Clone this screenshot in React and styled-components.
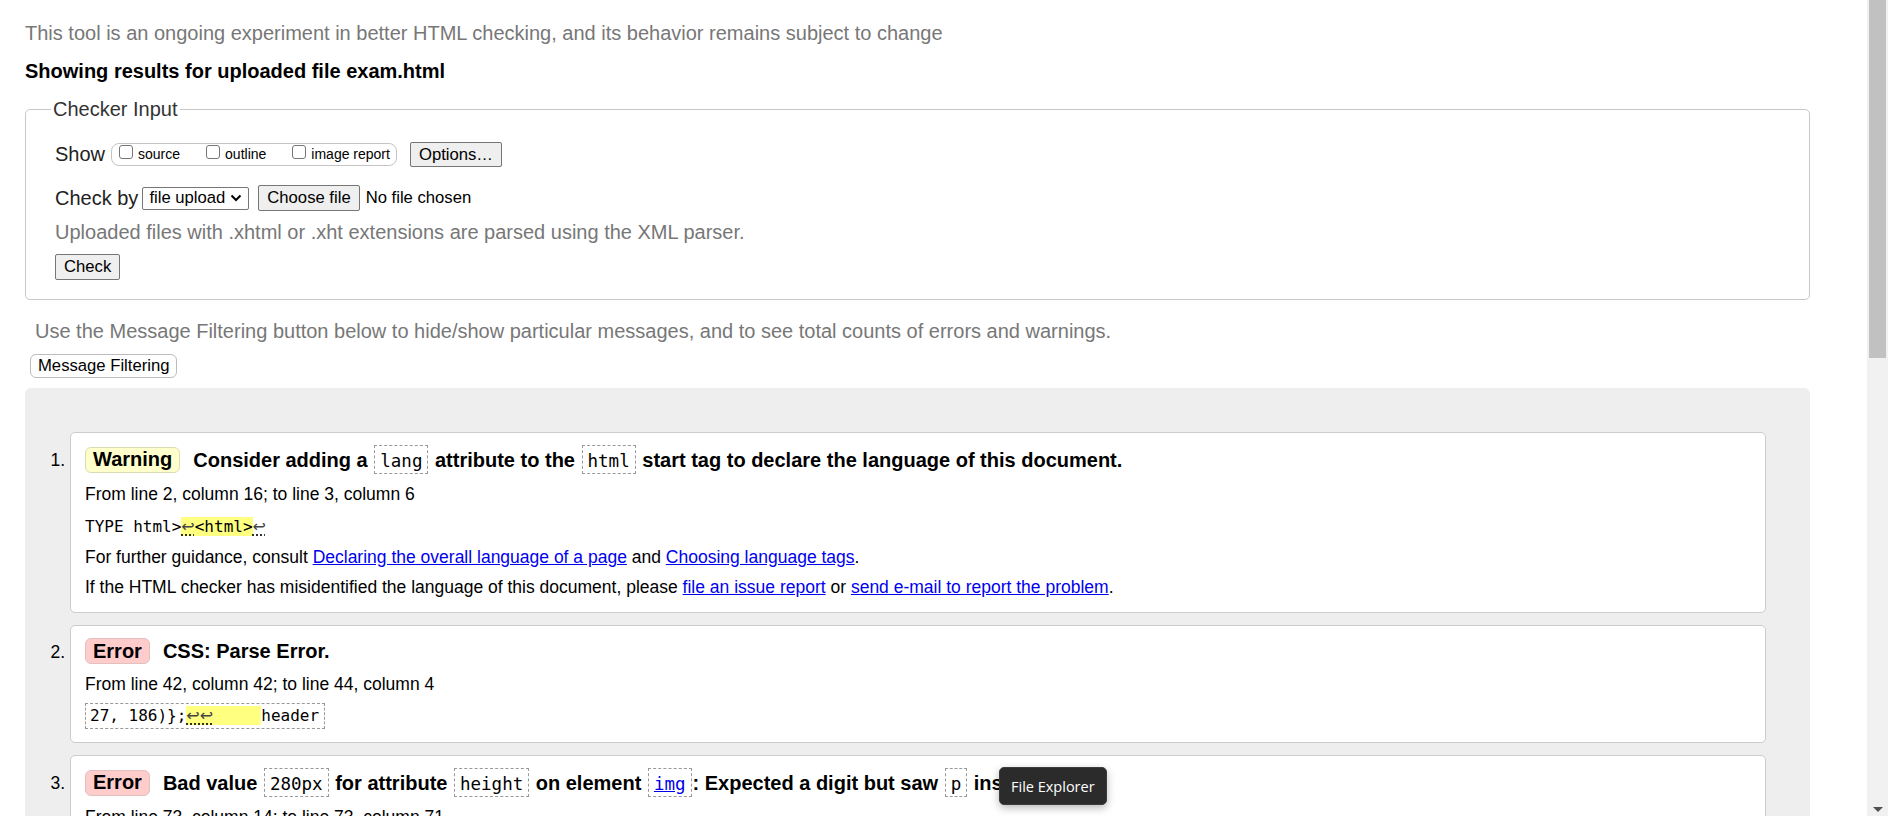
import React from "react"
import styled, { createGlobalStyle } from "styled-components"

const GlobalStyle = createGlobalStyle`
  html, body {
    margin: 0;
    padding: 0;
    background: #fff;
  }
  body {
    font-family: "Liberation Sans", Arial, sans-serif;
    color: #000;
    overflow: hidden;
  }
`

const MONO = `"DejaVu Sans Mono", "Liberation Mono", monospace`

export default function App() {
    return (
        <Screen>
            <GlobalStyle />
            <Page>
                <Intro>This tool is an ongoing experiment in better HTML checking, and its behavior remains subject to change</Intro>
                <Heading>Showing results for uploaded file exam.html</Heading>

                <Fieldset>
                    <Legend>Checker Input</Legend>
                    <Row $h={25}>
                        <FieldLabel $mr={6}>Show</FieldLabel>
                        <CheckGroup>
                            <CheckItem><CheckBox /><CheckText>source</CheckText></CheckItem>
                            <CheckItem><CheckBox /><CheckText>outline</CheckText></CheckItem>
                            <CheckItem><CheckBox /><CheckText>image report</CheckText></CheckItem>
                        </CheckGroup>
                        <Button $h={25}>Options…</Button>
                    </Row>
                    <Row $h={26} $mt={18}>
                        <FieldLabel $mr={4}>Check by</FieldLabel>
                        <SelectBox>
                            <span>file upload</span>
                            <svg width="12" height="8" viewBox="0 0 12 8">
                                <polyline points="1.5,1.5 6,6 10.5,1.5" fill="none" stroke="#000" strokeWidth="2" />
                            </svg>
                        </SelectBox>
                        <Button $h={26} $ml={9}>Choose file</Button>
                        <FileName>No file chosen</FileName>
                    </Row>
                    <Hint>Uploaded files with .xhtml or .xht extensions are parsed using the XML parser.</Hint>
                    <Row $h={26} $mt={10}>
                        <Button $h={26}>Check</Button>
                    </Row>
                </Fieldset>

                <FilterHint>Use the Message Filtering button below to hide/show particular messages, and to see total counts of errors and warnings.</FilterHint>
                <FilterButton>Message Filtering</FilterButton>

                <Results>
                    <MessageList>
                        <Card>
                            <TitleRow>
                                <Badge $kind="warning">Warning</Badge>
                                <TitleText>
                                    Consider adding a <Code>lang</Code> attribute to the <Code>html</Code> start tag to declare the language of this document.
                                </TitleText>
                            </TitleRow>
                            <MsgLine $mt={8}>From line 2, column 16; to line 3, column 6</MsgLine>
                            <Extract $mt={9}>
                                TYPE html&gt;<Mark><Ret>↩</Ret>&lt;html&gt;</Mark><Ret>↩</Ret>
                            </Extract>
                            <MsgLine $mt={6}>
                                For further guidance, consult <Link href="#">Declaring the overall language of a page</Link> and <Link href="#">Choosing language tags</Link>.
                            </MsgLine>
                            <MsgLine $mt={6}>
                                If the HTML checker has misidentified the language of this document, please <Link href="#">file an issue report</Link> or <Link href="#">send e-mail to report the problem</Link>.
                            </MsgLine>
                        </Card>

                        <Card>
                            <TitleRow>
                                <Badge $kind="error">Error</Badge>
                                <TitleText>CSS: Parse Error.</TitleText>
                            </TitleRow>
                            <MsgLine $mt={8}>From line 42, column 42; to line 44, column 4</MsgLine>
                            <ExtractBox $mt={7}>
                                27, 186)}&#59;<Mark><Ret>↩↩</Ret>{"     "}</Mark>header
                            </ExtractBox>
                        </Card>

                        <Card>
                            <TitleRow>
                                <Badge $kind="error">Error</Badge>
                                <TitleText>
                                    Bad value <Code>280px</Code> for attribute <Code>height</Code> on element <Code><Link href="#">img</Link></Code>: Expected a digit but saw <Code>p</Code> instead.
                                </TitleText>
                            </TitleRow>
                            <MsgLine $mt={8}>From line 73, column 14; to line 73, column 71</MsgLine>
                            <ExtractBox $mt={7}>
                                ↩    <Mark>&lt;img src="img/banner.jpg" height="280px"&gt;</Mark><Ret>↩</Ret>
                            </ExtractBox>
                        </Card>
                    </MessageList>
                </Results>

                <Tooltip>File Explorer</Tooltip>
            </Page>

            <Scrollbar>
                <Thumb />
                <ArrowDown />
            </Scrollbar>
        </Screen>
    )
}

const Screen = styled.div`
    display: flex;
    width: 1888px;
    height: 816px;
    overflow: hidden;
`

const Page = styled.main`
    position: relative;
    flex: 1;
    min-width: 0;
    padding-top: 22px;
    overflow: hidden;
`

const Intro = styled.p`
    margin: 0 0 0 25px;
    font-size: 20px;
    line-height: 23px;
    color: #777;
`

const Heading = styled.h2`
    margin: 15px 0 0 25px;
    font-size: 20px;
    line-height: 23px;
    font-weight: bold;
`

const Fieldset = styled.fieldset`
    margin: 15px 57px 0 25px;
    padding: 21px 20px 19px 29px;
    border: 1px solid #c8c8c8;
    border-radius: 5px;
    min-width: 0;
`

const Legend = styled.legend`
    margin-left: -4px;
    padding: 0 2px;
    font-size: 20px;
    line-height: 23px;
    color: #333;
`

const Row = styled.div`
    display: flex;
    align-items: center;
    height: ${p => p.$h}px;
    margin-top: ${p => p.$mt || 0}px;
`

const FieldLabel = styled.span`
    font-size: 20px;
    line-height: 23px;
    color: #222;
    margin-right: ${p => p.$mr}px;
`

const CheckGroup = styled.div`
    display: flex;
    align-items: flex-start;
    gap: 26px;
    height: 23px;
    box-sizing: border-box;
    padding: 0 6px 0 7px;
    margin-right: 13px;
    border: 1px solid #c4c4c4;
    border-radius: 8px;
`

const CheckItem = styled.label`
    display: flex;
    align-items: flex-start;
    gap: 5px;
`

const CheckBox = styled.span`
    width: 14px;
    height: 14px;
    box-sizing: border-box;
    margin-top: 1px;
    border: 1px solid #767676;
    border-radius: 3px;
    background: #fff;
`

const CheckText = styled.span`
    font-size: 14px;
    line-height: 16px;
    margin-top: 2px;
`

const Button = styled.button`
    height: ${p => p.$h}px;
    box-sizing: border-box;
    margin: 0 0 0 ${p => p.$ml || 0}px;
    padding: 0 8px;
    font-family: "Liberation Sans", Arial, sans-serif;
    font-size: 16.67px;
    white-space: nowrap;
    color: #000;
    background: #efefef;
    border: 1px solid #767676;
    border-radius: 2px;
`

const SelectBox = styled.div`
    display: flex;
    align-items: center;
    flex-shrink: 0;
    gap: 5px;
    height: 23px;
    box-sizing: border-box;
    padding: 0 6px;
    font-size: 16.67px;
    white-space: nowrap;
    background: #fff;
    border: 1px solid #767676;
    border-radius: 2px;
`

const FileName = styled.span`
    margin-left: 6px;
    font-size: 16.67px;
`

const Hint = styled.p`
    margin: 10px 0 0;
    font-size: 20px;
    line-height: 23px;
    color: #777;
`

const FilterHint = styled.p`
    margin: 20px 0 0 35px;
    font-size: 20px;
    line-height: 23px;
    color: #777;
`

const FilterButton = styled.button`
    display: block;
    height: 24px;
    margin: 11px 0 0 30px;
    padding: 0 7px;
    font-family: "Liberation Sans", Arial, sans-serif;
    font-size: 16.67px;
    color: #000;
    background: #fff;
    border: 1px solid #bcbcbc;
    border-radius: 6px;
`

const Results = styled.section`
    margin: 10px 57px 0 25px;
    padding: 44px 44px 40px 45px;
    background: #eeeeee;
    border-radius: 6px 6px 0 0;
    min-height: 500px;
`

const MessageList = styled.ol`
    margin: 0;
    padding: 0;
    list-style: decimal outside;
`

const Card = styled.li`
    margin-bottom: 12px;
    padding: 12px 14px 13px;
    font-size: 17.5px;
    background: #fff;
    border: 1px solid #cccccc;
    border-radius: 5px;
`

const TitleRow = styled.div`
    display: flex;
    align-items: center;
    gap: 13px;
`

const Badge = styled.span`
    display: inline-flex;
    align-items: center;
    flex-shrink: 0;
    height: 26px;
    box-sizing: border-box;
    padding: 0 7px;
    font-size: 20px;
    font-weight: bold;
    background: ${p => (p.$kind === "warning" ? "#ffffcc" : "#ffcccc")};
    border: 1px solid ${p => (p.$kind === "warning" ? "#dcdcb4" : "#e2c0c0")};
    border-radius: 6px;
`

const TitleText = styled.span`
    font-size: 20px;
    line-height: 23px;
    font-weight: bold;
`

const Code = styled.code`
    display: inline-block;
    margin: 0 1px;
    padding: 6px 5px 2px;
    font-family: ${MONO};
    font-size: 17.5px;
    font-weight: normal;
    line-height: 19px;
    border: 1px dashed #999;
`

const MsgLine = styled.p`
    margin: ${p => p.$mt}px 0 0;
    font-size: 17.5px;
    line-height: 24px;
`

const Extract = styled.p`
    margin: ${p => p.$mt}px 0 0;
    font-family: ${MONO};
    font-size: 16px;
    line-height: 24px;
    white-space: pre;
`

const ExtractBox = styled.p`
    display: table;
    margin: ${p => p.$mt}px 0 0;
    padding: 2px 5px 2px 4px;
    font-family: ${MONO};
    font-size: 16px;
    line-height: 20px;
    white-space: pre;
    border: 1px dashed #999;
`

const Mark = styled.mark`
    background: #ffff80;
    color: inherit;
`

const Ret = styled.span`
    font-family: "DejaVu Sans", sans-serif;
    font-size: 16px;
    color: #444;
    text-decoration: underline dotted #000;
    text-underline-offset: 3px;
`

const Link = styled.a`
    color: #0000ee;
    text-decoration: underline;
`

const Tooltip = styled.div`
    position: absolute;
    left: 999px;
    top: 767px;
    height: 38px;
    box-sizing: border-box;
    padding: 0 11px;
    font-family: "Open Sans", "Noto Sans", sans-serif;
    font-size: 14.5px;
    line-height: 37px;
    color: #fff;
    background: #2b2b2b;
    border: 1px solid #3c3c3c;
    border-radius: 5px;
    box-shadow: 0 3px 8px rgba(0, 0, 0, 0.28);
`

const Scrollbar = styled.aside`
    display: flex;
    flex-direction: column;
    justify-content: space-between;
    align-items: center;
    width: 21px;
    flex-shrink: 0;
    box-sizing: border-box;
    padding-bottom: 4px;
    background: #f1f1f1;
`

const Thumb = styled.div`
    width: 17px;
    height: 358px;
    background: #c1c1c1;
`

const ArrowDown = styled.div`
    width: 0;
    height: 0;
    border-left: 5px solid transparent;
    border-right: 5px solid transparent;
    border-top: 5px solid #505050;
`
